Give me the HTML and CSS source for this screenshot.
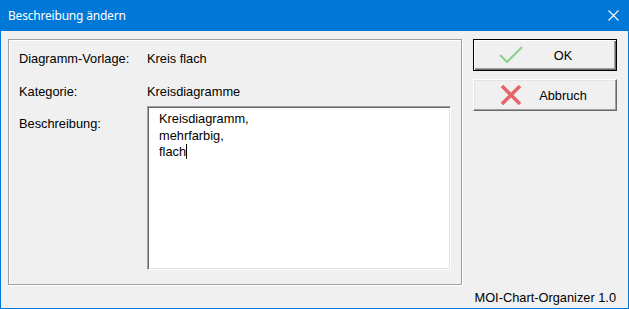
FILE: index.html
```html
<!DOCTYPE html>
<html>
<head>
<meta charset="utf-8">
<link rel="stylesheet" href="styles.css">
</head>
<body>
<div class="window">
  <div class="titlebar">
    <span class="title">Beschreibung ändern</span>
    <svg class="close" width="11" height="11" viewBox="0 0 11 11"><path d="M0.5 0.5 L10.5 10.5 M10.5 0.5 L0.5 10.5" stroke="#fff" stroke-width="1.1" fill="none"/></svg>
  </div>
  <div class="client">
    <div class="main">
      <div class="group">
        <div class="row r1"><span class="label">Diagramm-Vorlage:</span><span class="value">Kreis flach</span></div>
        <div class="row r2"><span class="label">Kategorie:</span><span class="value">Kreisdiagramme</span></div>
        <div class="row r3"><span class="label lab3">Beschreibung:</span>
          <div class="edit"><div class="line">Kreisdiagramm,</div><div class="line">mehrfarbig,</div><div class="line">flach<span class="caret"></span></div></div>
        </div>
      </div>
      <div class="buttons">
        <div class="btn default">
          <svg class="icon" width="24" height="18" viewBox="0 0 24 18"><polyline points="1,9 8,16 23,1" fill="none" stroke="#8fd08f" stroke-width="2.2"/></svg>
          <span class="btxt">OK</span>
        </div>
        <div class="btn">
          <svg class="icon" width="24" height="22" viewBox="0 0 24 22"><path d="M3 2 L21 20 M21 2 L3 20" fill="none" stroke="#e8656a" stroke-width="3.6"/></svg>
          <span class="btxt">Abbruch</span>
        </div>
      </div>
    </div>
    <div class="footer">MOI-Chart-Organizer 1.0</div>
  </div>
</div>
</body>
</html>
```
FILE: styles.css
```css
html, body { margin: 0; padding: 0; }
body { width: 629px; height: 309px; overflow: hidden; background: #f0f0f0; }
.window {
  box-sizing: border-box; width: 629px; height: 309px;
  border: 1px solid #0078d7; border-top: none;
  display: flex; flex-direction: column; background: #f0f0f0;
  font-family: "Liberation Sans", Arial, sans-serif; font-size: 12.8px; color: #000;
}
.titlebar {
  height: 31px; margin: 0 -1px; background: #0078d7; color: #fff;
  display: flex; align-items: center; justify-content: space-between;
  padding: 0 10px 0 8px;
}
.title { font-family: "Noto Sans", sans-serif; font-size: 12px; letter-spacing: -0.2px; }
.close { display: block; margin-top: -1px; }
.client { flex: 1; display: flex; flex-direction: column; padding: 8px 0 0 7px; }
.main { display: flex; gap: 11px; }
.group {
  box-sizing: border-box; width: 454px; height: 246px;
  border: 1px solid #a0a0a0;
  box-shadow: 1px 1px 0 #fff, inset 1px 1px 0 #fff;
  padding: 11px 0 0 10px;
  display: flex; flex-direction: column;
}
.row { display: flex; line-height: 15px; }
.label { width: 128px; flex: none; }
.r2 { margin-top: 18px; }
.r3 { margin-top: 7px; }
.lab3 { padding-top: 10px; }
.edit {
  box-sizing: border-box; width: 304px; height: 164px; background: #fff;
  border: 1px solid; border-color: #a0a0a0 #fff #fff #a0a0a0;
  box-shadow: inset 1px 1px 0 #696969, inset -1px -1px 0 #e3e3e3;
  padding: 4px 0 0 11px; line-height: 16.5px;
}
.caret { display: inline-block; width: 1px; height: 15px; background: #000; vertical-align: -3px; }
.buttons { display: flex; flex-direction: column; gap: 8px; }
.btn {
  box-sizing: border-box; width: 144px; height: 32px; background: #f0f0f0;
  border: 1px solid; border-color: #fff #696969 #696969 #fff;
  box-shadow: inset -1px -1px 0 #a0a0a0, inset 1px 1px 0 #e3e3e3;
  display: flex; align-items: center; position: relative;
}
.btn.default {
  border: 1px solid #000;
  box-shadow: inset 1px 1px 0 #fff, inset -1px -1px 0 #696969, inset -2px -2px 0 #a0a0a0;
}
.icon { position: absolute; left: 25px; top: 50%; transform: translateY(-50%); }
.default .icon { top: 6px; transform: none; }
.btxt { flex: 1; text-align: center; padding-left: 36px; }
.footer { text-align: right; padding: 5px 12px 0 0; line-height: 15px; }
```
